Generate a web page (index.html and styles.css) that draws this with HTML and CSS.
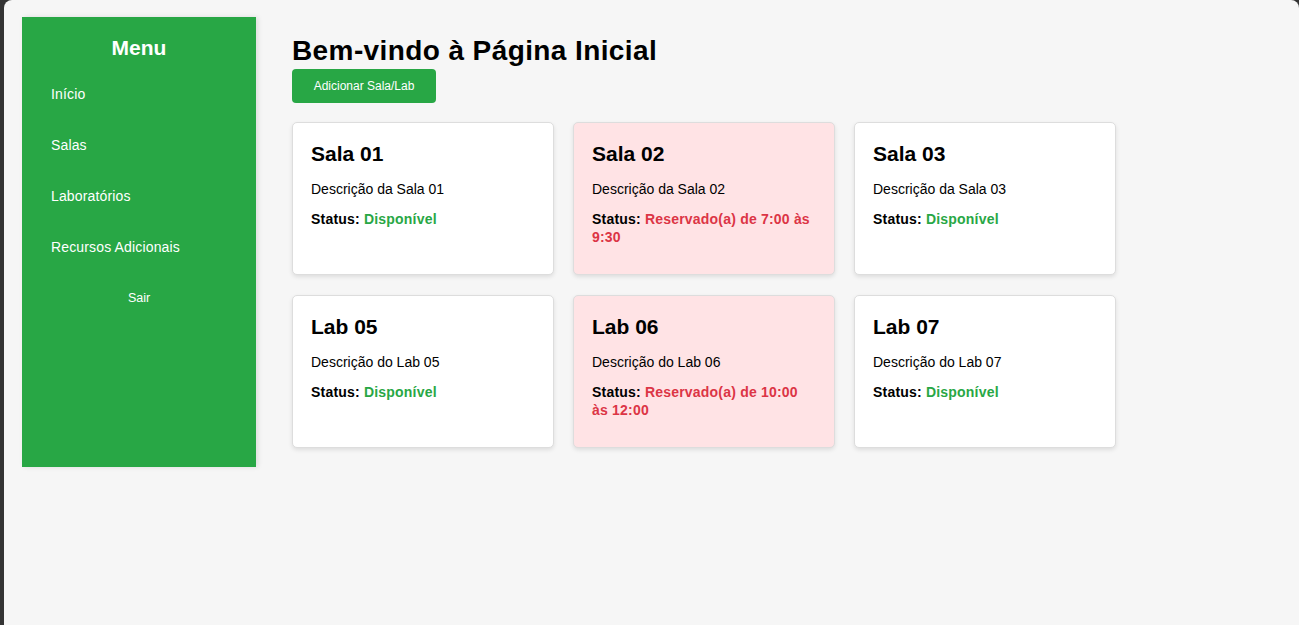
FILE: index.html
```html
<!DOCTYPE html>
<html lang="pt">
<head>
<meta charset="utf-8">
<title>Página Inicial</title>
<link rel="stylesheet" href="styles.css">
</head>
<body>
<div class="window">
  <aside class="sidebar">
    <h2 class="menu-title">Menu</h2>
    <nav class="menu">
      <a href="#" class="menu-link">Início</a>
      <a href="#" class="menu-link">Salas</a>
      <a href="#" class="menu-link">Laboratórios</a>
      <a href="#" class="menu-link">Recursos Adicionais</a>
      <a href="#" class="menu-exit">Sair</a>
    </nav>
  </aside>
  <main class="main">
    <h1 class="page-title">Bem-vindo à Página Inicial</h1>
    <button class="add-btn">Adicionar Sala/Lab</button>
    <div class="grid">
      <div class="card">
        <h3 class="card-title">Sala 01</h3>
        <p class="card-desc">Descrição da Sala 01</p>
        <p class="card-status">Status: <span class="ok">Disponível</span></p>
      </div>
      <div class="card reserved">
        <h3 class="card-title">Sala 02</h3>
        <p class="card-desc">Descrição da Sala 02</p>
        <p class="card-status">Status: <span class="busy">Reservado(a) de 7:00 às 9:30</span></p>
      </div>
      <div class="card">
        <h3 class="card-title">Sala 03</h3>
        <p class="card-desc">Descrição da Sala 03</p>
        <p class="card-status">Status: <span class="ok">Disponível</span></p>
      </div>
      <div class="card">
        <h3 class="card-title">Lab 05</h3>
        <p class="card-desc">Descrição do Lab 05</p>
        <p class="card-status">Status: <span class="ok">Disponível</span></p>
      </div>
      <div class="card reserved">
        <h3 class="card-title">Lab 06</h3>
        <p class="card-desc">Descrição do Lab 06</p>
        <p class="card-status">Status: <span class="busy">Reservado(a) de 10:00 às 12:00</span></p>
      </div>
      <div class="card">
        <h3 class="card-title">Lab 07</h3>
        <p class="card-desc">Descrição do Lab 07</p>
        <p class="card-status">Status: <span class="ok">Disponível</span></p>
      </div>
    </div>
  </main>
</div>
</body>
</html>
```
FILE: styles.css
```css
html, body {
  margin: 0;
  height: 100%;
  background: #343434;
}
body {
  font-family: "Liberation Sans", Arial, sans-serif;
  padding-left: 4px;
  box-sizing: border-box;
}
.window {
  height: 100%;
  background: #f6f6f6;
  border-radius: 8px 8px 0 0;
  display: flex;
  align-items: flex-start;
  padding: 17px 0 0 18px;
  box-sizing: border-box;
}
.sidebar {
  width: 234px;
  height: 450px;
  background: #28a745;
  color: #fff;
  box-shadow: 2px 0 5px rgba(0,0,0,0.1);
  flex-shrink: 0;
}
.menu-title {
  margin: 0;
  padding-top: 19px;
  text-align: center;
  font-size: 21px;
  font-weight: bold;
  line-height: 24px;
}
.menu {
  display: flex;
  flex-direction: column;
  padding-top: 26px;
}
.menu-link {
  color: #fff;
  text-decoration: none;
  font-size: 14px;
  letter-spacing: 0.15px;
  line-height: 17px;
  padding: 0 0 34px 29px;
}
.menu-exit {
  color: #fff;
  text-decoration: none;
  font-size: 12.5px;
  line-height: 15px;
  text-align: center;
  margin-top: 1px;
}
.main {
  padding-left: 36px;
  padding-top: 20px;
}
.page-title {
  margin: 0 0 4px;
  font-size: 28px;
  letter-spacing: 0.4px;
  line-height: 28px;
  color: #000;
}
.add-btn {
  display: block;
  width: 144px;
  height: 34px;
  background: #28a745;
  color: #fff;
  border: 0;
  border-radius: 4px;
  font-family: "Liberation Sans", Arial, sans-serif;
  font-size: 12px;
}
.grid {
  display: grid;
  grid-template-columns: repeat(3, 262px);
  gap: 20px 19px;
  margin-top: 19px;
}
.card {
  height: 153px;
  box-sizing: border-box;
  background: #fff;
  border: 1px solid #dddddd;
  border-radius: 5px;
  box-shadow: 0 2px 4px rgba(0,0,0,0.1);
  padding: 19px 20px 19px 18px;
}
.card.reserved {
  background: #ffe3e5;
}
.card-title {
  margin: 0;
  font-size: 21px;
  line-height: 24px;
  color: #000;
}
.card-desc {
  margin: 15px 0 0;
  font-size: 14px;
  line-height: 16px;
}
.card-status {
  margin: 13px 0 0;
  font-size: 14px;
  letter-spacing: 0.2px;
  line-height: 18px;
  font-weight: bold;
}
.ok { color: #28a745; }
.busy { color: #dc3545; }
```
